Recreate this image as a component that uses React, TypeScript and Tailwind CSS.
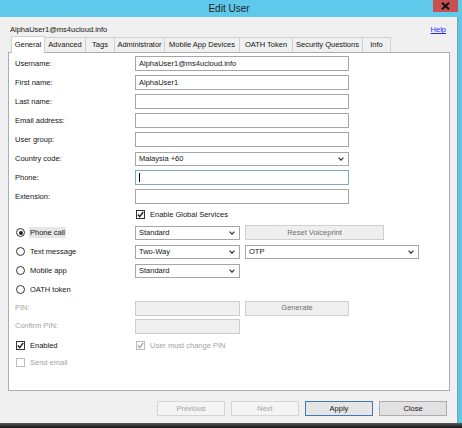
import type { ReactNode } from 'react'

const TABS: { label: string; w: string; active?: boolean }[] = [
  { label: 'General', w: 'w-[34px]', active: true },
  { label: 'Advanced', w: 'w-[42px]' },
  { label: 'Tags', w: 'w-[30px]' },
  { label: 'Administrator', w: 'w-[51px]' },
  { label: 'Mobile App Devices', w: 'w-[76px]' },
  { label: 'OATH Token', w: 'w-[54px]' },
  { label: 'Security Questions', w: 'w-[71px]' },
  { label: 'Info', w: 'w-[29px]' },
]

function Chevron() {
  return (
    <svg width="6" height="4" viewBox="0 0 6 4" className="shrink-0">
      <polyline points="0.6,0.6 3,3.2 5.4,0.6" fill="none" stroke="#333" strokeWidth="1.2" />
    </svg>
  )
}

function TextBox({ value, focused, disabled, w = 'w-[214px]' }: { value?: string; focused?: boolean; disabled?: boolean; w?: string }) {
  return (
    <div
      className={`${w} h-[15px] border flex items-center px-[3px] ${
        disabled ? 'bg-[#f0f0f0] border-[#cccccc]' : focused ? 'bg-white border-[#7aa6d0]' : 'bg-white border-[#a6a6a6]'
      }`}
    >
      {focused ? <span className="w-px h-[9px] bg-black" /> : value}
    </div>
  )
}

function Select({ value, w = 'w-[214px]' }: { value: string; w?: string }) {
  return (
    <div className={`${w} h-[14px] border border-[#a6a6a6] bg-white flex items-center justify-between pl-[3px] pr-[4px]`}>
      <span>{value}</span>
      <Chevron />
    </div>
  )
}

function Check({ checked, disabled }: { checked?: boolean; disabled?: boolean }) {
  return (
    <div className={`w-[9px] h-[9px] border bg-white flex items-center justify-center ${disabled ? 'border-[#bcbcbc]' : 'border-[#333]'}`}>
      {checked && (
        <svg width="7" height="7" viewBox="0 0 7 7">
          <polyline points="0.8,3.6 2.7,5.6 6.2,1" fill="none" stroke={disabled ? '#a8a8a8' : '#222'} strokeWidth="1.4" />
        </svg>
      )}
    </div>
  )
}

function Radio({ checked }: { checked?: boolean }) {
  return (
    <div className="w-[9px] h-[9px] rounded-full border border-[#333] bg-white flex items-center justify-center">
      {checked && <div className="w-[4px] h-[4px] rounded-full bg-[#222]" />}
    </div>
  )
}

function Row({ label, h = 'h-[19px]', disabled, children }: { label?: ReactNode; h?: string; disabled?: boolean; children?: ReactNode }) {
  return (
    <div className={`${h} flex items-center`}>
      <div className={`w-[120px] shrink-0 ${disabled ? 'text-[#a3a3a3]' : ''}`}>{label}</div>
      {children}
    </div>
  )
}

function RadioLabel({ text, checked }: { text: string; checked?: boolean }) {
  return (
    <div className="flex items-center gap-[4px] pl-[1px]">
      <Radio checked={checked} />
      <span className={`px-[1px] leading-[11px] ${checked ? 'bg-[#e6e6e6]' : ''}`}>{text}</span>
    </div>
  )
}

function GreyButton({ text, w }: { text: string; w: string }) {
  return (
    <div className={`${w} h-[15px] ml-[5px] border border-[#cfcfcf] bg-[#efefef] text-[#6e6e6e] flex items-center justify-center`}>
      {text}
    </div>
  )
}

export default function App() {
  return (
    <div className="w-[462px] h-[428px] flex flex-col bg-[#f0f0f0] overflow-hidden font-['Liberation_Sans',Arial,sans-serif] text-[7.5px] text-[#151515] leading-none">
      {/* title bar */}
      <div className="relative h-[17px] shrink-0 bg-[#5fc9ec] flex items-center justify-center">
        <span className="text-[10px] text-[#1e1e1e] -ml-[4px]">Edit User</span>
        <div className="absolute right-[4px] top-0 w-[25px] h-[12px] bg-[#c75050] flex items-center justify-center">
          <svg width="9" height="8" viewBox="0 0 9 8">
            <path d="M1 0.8 L8 7.2 M8 0.8 L1 7.2" stroke="#111" strokeWidth="2" />
          </svg>
        </div>
      </div>

      <div className="flex flex-1">
        <div className="w-[457px] flex flex-col pt-[7px]">
          <div className="h-[12px] flex items-center justify-between pl-[10px] pr-[11px]">
            <span>AlphaUser1@ms4ucloud.info</span>
            <span className="text-[#2b2bff] underline">Help</span>
          </div>

          {/* tabs */}
          <div className="h-[16px] flex items-end pl-[11px]">
            {TABS.map((t, i) => (
              <div
                key={t.label}
                className={`${t.w} ${i > 0 ? '-ml-px' : ''} border border-b-0 border-[#d0d0d0] flex items-center justify-center ${
                  t.active ? 'h-[17px] -mb-px relative z-10 bg-white' : 'h-[15px] bg-[#f0f0f0]'
                }`}
              >
                {t.label}
              </div>
            ))}
          </div>

          {/* panel */}
          <div className="ml-[8px] w-[442px] h-[339px] border border-[#adadad] bg-white pl-[6px] pt-[1px] flex flex-col">
            <Row label="Username:"><TextBox value="AlphaUser1@ms4ucloud.info" /></Row>
            <Row label="First name:"><TextBox value="AlphaUser1" /></Row>
            <Row label="Last name:"><TextBox /></Row>
            <Row label="Email address:"><TextBox /></Row>
            <Row label="User group:"><TextBox /></Row>
            <Row label="Country code:"><Select value="Malaysia +60" /></Row>
            <Row label="Phone:"><TextBox focused /></Row>
            <Row label="Extension:"><TextBox /></Row>
            <Row h="h-[17px]">
              <div className="flex items-center gap-[5px] pl-[1px]">
                <Check checked />
                <span>Enable Global Services</span>
              </div>
            </Row>
            <Row label={<RadioLabel text="Phone call" checked />}>
              <Select value="Standard" w="w-[105px]" />
              <GreyButton text="Reset Voiceprint" w="w-[139px]" />
            </Row>
            <Row label={<RadioLabel text="Text message" />}>
              <Select value="Two-Way" w="w-[105px]" />
              <div className="ml-[5px]">
                <Select value="OTP" w="w-[174px]" />
              </div>
            </Row>
            <Row label={<RadioLabel text="Mobile app" />}>
              <Select value="Standard" w="w-[105px]" />
            </Row>
            <Row label={<RadioLabel text="OATH token" />} />
            <Row label="PIN:" h="h-[18px]" disabled>
              <TextBox disabled w="w-[105px]" />
              <GreyButton text="Generate" w="w-[104px]" />
            </Row>
            <Row label="Confirm PIN:" h="h-[18px]" disabled>
              <TextBox disabled w="w-[105px]" />
            </Row>
            <div className="h-[1px]" />
            <Row
              label={
                <div className="flex items-center gap-[5px] pl-[1px]">
                  <Check checked />
                  <span>Enabled</span>
                </div>
              }
            >
              <div className="flex items-center gap-[5px] pl-[1px] text-[#a3a3a3]">
                <Check checked disabled />
                <span>User must change PIN</span>
              </div>
            </Row>
            <Row
              h="h-[15px]"
              label={
                <div className="flex items-center gap-[5px] pl-[1px] text-[#a3a3a3]">
                  <Check disabled />
                  <span>Send email</span>
                </div>
              }
            />
          </div>

          {/* buttons */}
          <div className="mt-[10px] flex justify-end gap-[6px] pr-[10px]">
            <div className="w-[68px] h-[15px] border border-[#d5d5d5] bg-[#f4f4f4] text-[#a3a3a3] flex items-center justify-center">Previous</div>
            <div className="w-[68px] h-[15px] border border-[#d5d5d5] bg-[#f4f4f4] text-[#a3a3a3] flex items-center justify-center">Next</div>
            <div className="w-[68px] h-[15px] border border-[#3d7ab8] bg-[#e5e5e5] flex items-center justify-center">Apply</div>
            <div className="w-[68px] h-[15px] border border-[#adadad] bg-[#e1e1e1] flex items-center justify-center">Close</div>
          </div>
        </div>
        <div className="w-[5px] border-l border-[#8a9aa4] bg-[#5cc7ea]" />
      </div>
      <div className="h-[5px] shrink-0 bg-gradient-to-b from-[#5a5a5a] to-[#161616]" />
    </div>
  )
}
